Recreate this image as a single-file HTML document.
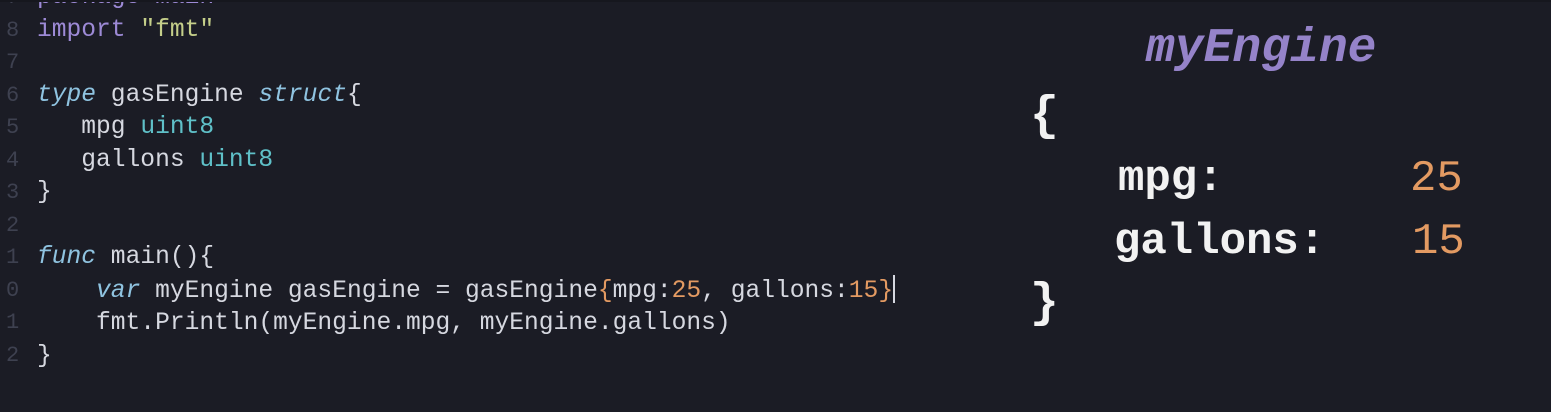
<!DOCTYPE html>
<html><head><style>
html,body{margin:0;padding:0;width:1551px;height:412px;background:#1b1c25;overflow:hidden}
.c{position:absolute;font-family:"Liberation Mono",monospace;font-size:24.6px;color:#d6d8e0;white-space:pre;line-height:32.5px}
.ln{position:absolute;left:6px;font-family:"Liberation Mono",monospace;font-size:22px;color:#3e4150;line-height:32.5px;white-space:pre}
.k{color:#9d8ad6}.s{color:#c5cf8a}.i{color:#8fc3e0;font-style:italic}.t{color:#5fc0c8}.n{color:#e39a62}
.r{position:absolute;font-family:"Liberation Mono",monospace;color:#f2f2f2;white-space:pre;font-weight:bold}
.cur{display:inline-block;width:2px;height:28px;background:#d6d8e0;vertical-align:-6px}
</style></head><body>
<div class="ln" style="top:-18px">7
8
7
6
5
4
3
2
1
0
1
2</div>
<div class="c" style="left:37px;top:-18px"><span class="k">package main</span>
<span class="k">import</span> <span class="s">"fmt"</span>

<span class="i">type</span> gasEngine <span class="i">struct</span>{
   mpg <span class="t">uint8</span>
   gallons <span class="t">uint8</span>
}

<span class="i">func</span> main(){
    <span class="i">var</span> myEngine gasEngine = gasEngine<span class="n">{</span>mpg:<span class="n">25</span>, gallons:<span class="n">15}</span><span class="cur"></span>
    fmt.Println(myEngine.mpg, myEngine.gallons)
}</div>
<div style="position:absolute;left:0;top:0;width:1551px;height:2px;background:#16171e"></div>
<div class="r" style="left:1146px;top:22px;font-size:48px;font-style:italic;color:#9583c9">myEngine</div>
<div class="r" style="left:1030px;top:90px;font-size:48px">{</div>
<div class="r" style="left:1118px;top:154px;font-size:44px">mpg:</div>
<div class="r" style="left:1410px;top:154px;font-size:44px;color:#e39a62;font-weight:normal">25</div>
<div class="r" style="left:1114px;top:217px;font-size:44px">gallons:</div>
<div class="r" style="left:1412px;top:217px;font-size:44px;color:#e39a62;font-weight:normal">15</div>
<div class="r" style="left:1030px;top:277px;font-size:48px">}</div>
</body></html>
